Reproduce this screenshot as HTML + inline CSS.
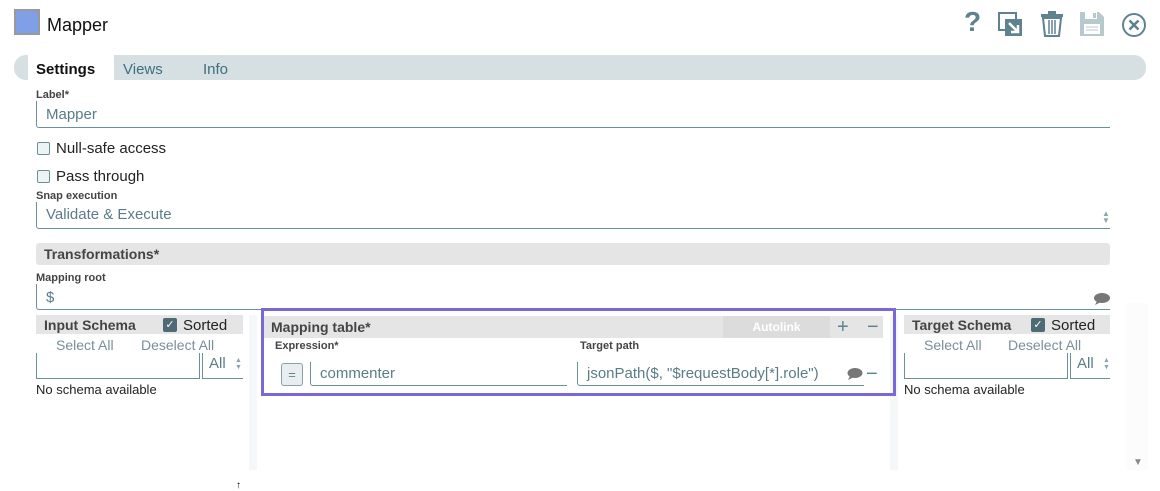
<!DOCTYPE html>
<html><head><meta charset="utf-8"><style>
*{box-sizing:border-box;margin:0;padding:0}
body{width:1160px;height:489px;background:#fff;font-family:"Liberation Sans",sans-serif;position:relative;overflow:hidden;color:#222}
.a{position:absolute;white-space:nowrap}
.lbl{font-size:11px;font-weight:bold;color:#444}
.inp{position:absolute;border-left:1px solid #6d8f9a;border-bottom:1px solid #6d8f9a;border-radius:0 0 0 3px;color:#5a7c88;font-size:15px;padding-left:9px}
.cb{position:absolute;width:13px;height:13px;border:1px solid #6d8f9a;border-radius:2px;background:#eef3f4}
.cbx{position:absolute;width:14px;height:14px;background:#4d6a75;border-radius:2px;color:#fff;font-size:11px;line-height:14px;text-align:center}
.hdr{position:absolute;background:#e5e5e5;font-weight:bold;font-size:14px;color:#444}
.link{color:#7a8f97;font-size:14px}
</style></head><body>
<div class="a" style="left:14px;top:9px;width:26px;height:26px;background:#7f9fe6;border:2px solid #999"></div>
<div class="a" style="left:47px;top:15px;font-size:18px;color:#111">Mapper</div>
<div class="a" style="left:964px;top:6px;font-size:28px;font-weight:bold;color:#5f8290">?</div>
<svg class="a" style="left:998px;top:12px" width="26" height="26" viewBox="0 0 26 26"><rect x="1" y="1" width="17" height="17" fill="none" stroke="#5f8290" stroke-width="2"/><rect x="7" y="7" width="17" height="17" fill="#5f8290"/><path d="M11 11 L20 20 M20 13 V20 H13" stroke="#fff" stroke-width="2.5" fill="none"/></svg>
<svg class="a" style="left:1040px;top:11px" width="24" height="26" viewBox="0 0 24 26"><rect x="1" y="3" width="22" height="3" fill="#5f8290"/><rect x="8" y="0" width="8" height="3" fill="#5f8290"/><path d="M3 7 L5 25 H19 L21 7 Z" fill="none" stroke="#5f8290" stroke-width="2"/><path d="M9 9 V23 M12 9 V23 M15 9 V23" stroke="#5f8290" stroke-width="1.5"/></svg>
<svg class="a" style="left:1080px;top:12px" width="24" height="24" viewBox="0 0 24 24"><path d="M0 0 H19 L24 5 V24 H0 Z" fill="#b7c9cf"/><rect x="5" y="0" width="12" height="7" fill="#fff"/><rect x="13" y="1" width="3" height="5" fill="#b7c9cf"/><rect x="4" y="12" width="16" height="10" fill="#fff"/><path d="M6 15 H18 M6 18 H18" stroke="#b7c9cf"/></svg>
<svg class="a" style="left:1121px;top:12px" width="26" height="26" viewBox="0 0 26 26"><circle cx="13" cy="13" r="11" fill="none" stroke="#5f8290" stroke-width="2"/><path d="M8.5 8.5 L17.5 17.5 M17.5 8.5 L8.5 17.5" stroke="#5f8290" stroke-width="2.5"/></svg>
<div class="a" style="left:14px;top:55px;width:1132px;height:25px;background:#d6dfe2;border-radius:12px"></div>
<div class="a" style="left:28px;top:55px;width:86px;height:25px;background:#fff"></div>
<div class="a" style="left:36px;top:61px;font-size:15px;font-weight:bold;color:#111">Settings</div>
<div class="a" style="left:123px;top:61px;font-size:15px;color:#3f6f80">Views</div>
<div class="a" style="left:203px;top:61px;font-size:15px;color:#3f6f80">Info</div>
<div class="a lbl" style="left:36px;top:89px">Label*</div>
<div class="inp" style="left:36px;top:101px;width:1074px;height:27px;line-height:28px">Mapper</div>
<div class="cb" style="left:37px;top:142px"></div><div class="a" style="left:56px;top:140px;font-size:15px">Null-safe access</div>
<div class="cb" style="left:37px;top:170px"></div><div class="a" style="left:56px;top:168px;font-size:15px">Pass through</div>
<div class="a lbl" style="left:36px;top:190px">Snap execution</div>
<div class="inp" style="left:36px;top:202px;width:1074px;height:27px;line-height:26px">Validate &amp; Execute</div>
<div class="a" style="left:1102px;top:210px;font-size:8px;line-height:7px;color:#8aa6b0">▲<br>▼</div>
<div class="hdr" style="left:36px;top:243px;width:1074px;height:22px;line-height:22px;padding-left:8px;border-radius:3px">Transformations*</div>
<div class="a lbl" style="left:36px;top:272px">Mapping root</div>
<div class="inp" style="left:36px;top:284px;width:1074px;height:26px;line-height:27px">$</div>
<svg class="a" style="left:1094px;top:292px" width="16" height="13" viewBox="0 0 16 13"><ellipse cx="8" cy="6" rx="8" ry="5" fill="#777"/><path d="M3 9 L1 13 L7 10Z" fill="#777"/></svg>
<div class="hdr" style="left:36px;top:315px;width:207px;height:19px;line-height:20px;padding-left:8px">Input Schema</div>
<div class="cbx" style="left:163px;top:318px">✓</div><div class="a" style="left:183px;top:317px;font-size:15px">Sorted</div>
<div class="a link" style="left:56px;top:337px">Select All</div><div class="a link" style="left:141px;top:337px">Deselect All</div>
<div class="a" style="left:36px;top:353px;width:164px;height:26px;border-left:1px solid #6d8f9a;border-bottom:1px solid #6d8f9a;border-right:1px solid #6d8f9a"></div>
<div class="a" style="left:202px;top:353px;width:41px;height:26px;border-left:1px solid #6d8f9a;border-bottom:1px solid #6d8f9a;color:#5a7c88;font-size:15px;padding-left:6px;line-height:22px">All</div>
<div class="a" style="left:235px;top:357px;font-size:7px;line-height:7px;color:#8aa6b0">▲<br>▼</div>
<div class="a" style="left:36px;top:382px;font-size:13px">No schema available</div>
<div class="a" style="left:249px;top:315px;width:8px;height:155px;background:#f5f8f8"></div>
<div class="a" style="left:890px;top:315px;width:8px;height:155px;background:#f5f8f8"></div>
<div class="a" style="left:261px;top:308px;width:635px;height:88px;border:3px solid #7b68d8"></div>
<div class="hdr" style="left:264px;top:316px;width:619px;height:22px;line-height:22px;padding-left:7px">Mapping table*</div>
<div class="a" style="left:723px;top:316px;width:107px;height:22px;background:#dcdcdc;color:#fff;font-weight:bold;font-size:12px;text-align:center;line-height:22px">Autolink</div>
<div class="a" style="left:837px;top:316px;font-size:20px;color:#5f8290">+</div>
<div class="a" style="left:867px;top:316px;font-size:20px;color:#5f8290">−</div>
<div class="a lbl" style="left:275px;top:340px">Expression*</div>
<div class="a lbl" style="left:580px;top:340px">Target path</div>
<div class="a" style="left:281px;top:363px;width:22px;height:23px;border:1px solid #8aa0a8;border-radius:3px;background:#e8eef0;color:#5f8290;text-align:center;font-size:13px;line-height:21px">=</div>
<div class="inp" style="left:310px;top:362px;width:257px;height:24px;line-height:23px">commenter</div>
<div class="inp" style="left:577px;top:362px;width:287px;height:24px;line-height:23px">jsonPath($, "$requestBody[*].role")</div>
<svg class="a" style="left:847px;top:367px" width="16" height="13" viewBox="0 0 16 13"><ellipse cx="8" cy="6" rx="7.5" ry="5" fill="#777"/><path d="M3 9 L1 13 L7 10Z" fill="#777"/></svg>
<div class="a" style="left:866px;top:363px;font-size:20px;color:#5f8290">−</div>
<div class="hdr" style="left:904px;top:315px;width:206px;height:19px;line-height:20px;padding-left:8px">Target Schema</div>
<div class="cbx" style="left:1031px;top:318px">✓</div><div class="a" style="left:1051px;top:317px;font-size:15px">Sorted</div>
<div class="a link" style="left:924px;top:337px">Select All</div><div class="a link" style="left:1008px;top:337px">Deselect All</div>
<div class="a" style="left:904px;top:353px;width:164px;height:26px;border-left:1px solid #6d8f9a;border-bottom:1px solid #6d8f9a;border-right:1px solid #6d8f9a"></div>
<div class="a" style="left:1070px;top:353px;width:40px;height:26px;border-left:1px solid #6d8f9a;border-bottom:1px solid #6d8f9a;color:#5a7c88;font-size:15px;padding-left:6px;line-height:22px">All</div>
<div class="a" style="left:1103px;top:357px;font-size:7px;line-height:7px;color:#8aa6b0">▲<br>▼</div>
<div class="a" style="left:904px;top:382px;font-size:13px">No schema available</div>
<div class="a" style="left:1126px;top:303px;width:22px;height:167px;background:#fcfcfc"></div>
<div class="a" style="left:1133px;top:457px;font-size:10px;color:#888">▼</div>
<div class="a" style="left:236px;top:480px;font-size:10px;color:#000">↑</div>
</body></html>
